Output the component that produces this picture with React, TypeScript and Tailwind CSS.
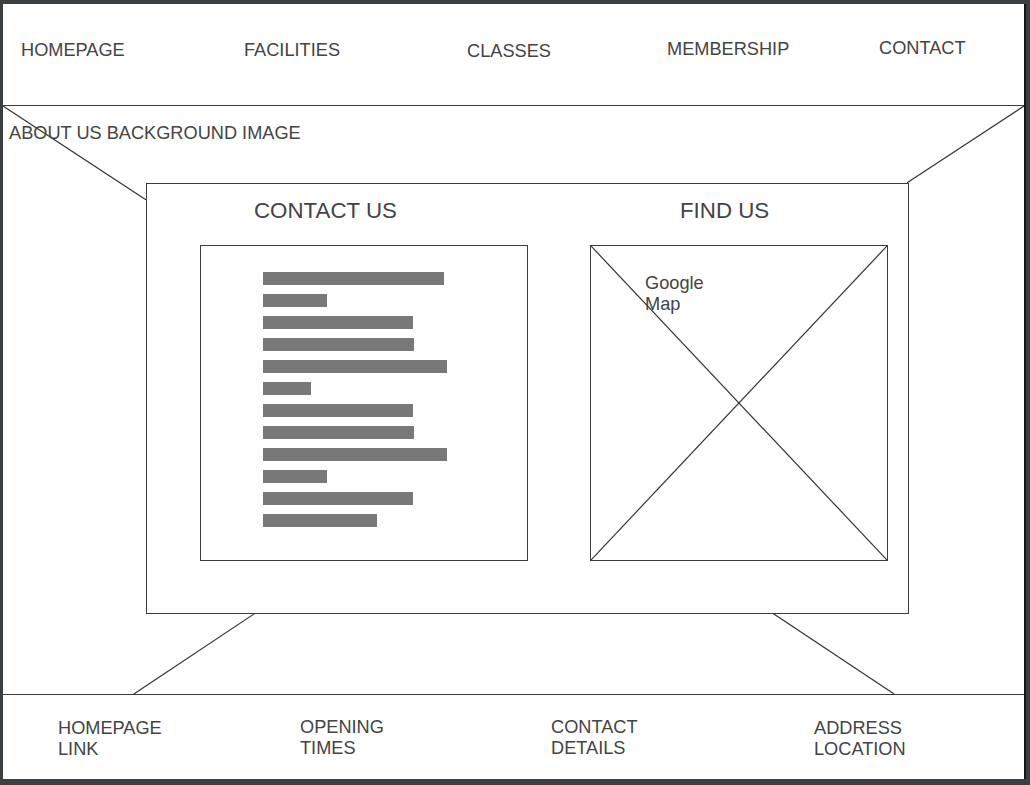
const bars = [181, 64, 150, 151, 184, 48, 150, 151, 184, 64, 150, 114];

const navItems = [
  { label: "HOMEPAGE", w: "w-[223px]", pt: "pt-[36px]" },
  { label: "FACILITIES", w: "w-[223px]", pt: "pt-[36px]" },
  { label: "CLASSES", w: "w-[200px]", pt: "pt-[37px]" },
  { label: "MEMBERSHIP", w: "w-[212px]", pt: "pt-[35px]" },
  { label: "CONTACT", w: "w-[140px]", pt: "pt-[34px]" },
];

const footerItems = [
  { lines: ["HOMEPAGE", "LINK"], w: "w-[242px]", pt: "pt-[23px]" },
  { lines: ["OPENING", "TIMES"], w: "w-[251px]", pt: "pt-[22px]" },
  { lines: ["CONTACT", "DETAILS"], w: "w-[263px]", pt: "pt-[22px]" },
  { lines: ["ADDRESS", "LOCATION"], w: "w-[200px]", pt: "pt-[23px]" },
];

export default function App() {
  return (
    <div className="w-[1030px] h-[785px] bg-[#3c3f42] pt-[4px] pl-[3px] pr-[4px] pb-[6px] font-['Liberation_Sans',Arial,sans-serif] text-[#444]">
      <div className="h-full bg-white border-r-2 border-[#151515] flex flex-col">
        {/* top nav */}
        <div className="h-[102px] border-b border-[#3d3d3d] flex pl-[18px] shrink-0">
          {navItems.map((item) => (
            <div key={item.label} className={`${item.w} ${item.pt} text-[18.2px] leading-[21px]`}>
              {item.label}
            </div>
          ))}
        </div>

        {/* background image area */}
        <div className="relative flex-1">
          <svg className="absolute inset-0 w-full h-full" viewBox="0 0 1022 589" preserveAspectRatio="none">
            <g stroke="#333" strokeWidth="1.2" fill="none">
              <line x1="0" y1="0" x2="143" y2="94" />
              <line x1="1022" y1="0" x2="905" y2="77" />
              <line x1="254" y1="507" x2="131" y2="589" />
              <line x1="769" y1="507" x2="892" y2="589" />
            </g>
          </svg>
          <div className="relative pt-[17px] pl-[6px] text-[18.2px] leading-[21px]">ABOUT US BACKGROUND IMAGE</div>

          <div className="relative mt-[39px] ml-[143px] w-[763px] h-[431px] border border-[#3d3d3d] bg-white flex pl-[53px] pt-[14px]">
            <div className="w-[328px]">
              <div className="pl-[54px] text-[22.3px] leading-[26px]">CONTACT US</div>
              <div className="mt-[21px] h-[316px] border border-[#3d3d3d] pl-[62px] pt-[26px] flex flex-col gap-[9px]">
                {bars.map((w, i) => (
                  <div key={i} className="h-[13px] bg-[#787878]" style={{ width: w }} />
                ))}
              </div>
            </div>

            <div className="ml-[62px] w-[298px]">
              <div className="pl-[90px] text-[22.3px] leading-[26px]">FIND US</div>
              <div className="relative mt-[21px] h-[316px] border border-[#3d3d3d]">
                <svg className="absolute inset-0 w-full h-full" viewBox="0 0 296 314" preserveAspectRatio="none">
                  <g stroke="#333" strokeWidth="1.2">
                    <line x1="0" y1="0" x2="296" y2="314" />
                    <line x1="296" y1="0" x2="0" y2="314" />
                  </g>
                </svg>
                <div className="relative pl-[54px] pt-[27px] text-[18.2px] leading-[21px]">
                  Google
                  <br />
                  Map
                </div>
              </div>
            </div>
          </div>
        </div>

        {/* footer */}
        <div className="h-[85px] border-t border-[#3d3d3d] flex pl-[55px] shrink-0">
          {footerItems.map((item) => (
            <div key={item.lines[0]} className={`${item.w} ${item.pt} text-[18.2px] leading-[21px]`}>
              {item.lines[0]}
              <br />
              {item.lines[1]}
            </div>
          ))}
        </div>
      </div>
    </div>
  );
}
